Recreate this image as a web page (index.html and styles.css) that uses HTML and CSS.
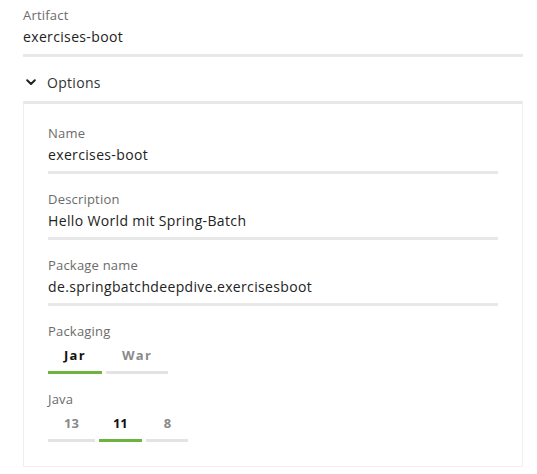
FILE: index.html
```html
<!DOCTYPE html>
<html>
<head>
<meta charset="utf-8">
<link rel="stylesheet" href="styles.css">
</head>
<body>
<div class="page">
  <div class="field field--top">
    <div class="label">Artifact</div>
    <div class="value">exercises-boot</div>
  </div>

  <div class="options-toggle">
    <svg class="chevron" width="10" height="7" viewBox="0 0 10 7"><path d="M1.2 1.2 L5 5 L8.8 1.2" fill="none" stroke="#222" stroke-width="2" stroke-linecap="round" stroke-linejoin="round"/></svg>
    <span>Options</span>
  </div>

  <div class="options-box">
    <div class="field">
      <div class="label">Name</div>
      <div class="value">exercises-boot</div>
    </div>
    <div class="field">
      <div class="label">Description</div>
      <div class="value">Hello World mit Spring-Batch</div>
    </div>
    <div class="field">
      <div class="label">Package name</div>
      <div class="value">de.springbatchdeepdive.exercisesboot</div>
    </div>
    <div class="group">
      <div class="label">Packaging</div>
      <div class="tabs">
        <span class="tab tab--active">Jar</span>
        <span class="tab">War</span>
      </div>
    </div>
    <div class="group">
      <div class="label">Java</div>
      <div class="tabs">
        <span class="tab tab--num">13</span>
        <span class="tab tab--num tab--narrow tab--active">11</span>
        <span class="tab tab--num tab--wide">8</span>
      </div>
    </div>
  </div>
</div>
</body>
</html>
```

FILE: styles.css
```css
html, body {
  margin: 0;
  padding: 0;
  background: #fff;
}
body {
  font-family: "Open Sans", Lato, sans-serif;
  color: #222;
}
.page {
  padding: 6px 14px 0 23px;
  width: 500px;
}
.label {
  font-size: 13px;
  letter-spacing: 0.2px;
  line-height: 18px;
  color: #6b6b6b;
}
.value {
  font-size: 14px;
  letter-spacing: 0.35px;
  line-height: 22px;
  margin-top: 2px;
  padding-bottom: 5px;
  border-bottom: 3px solid #e8e8e8;
  color: #222;
}
.field--top .value {
  padding-bottom: 6px;
}
.options-toggle {
  margin-top: 14px;
  height: 22px;
  display: flex;
  align-items: center;
  font-size: 14px;
  letter-spacing: 0.3px;
  color: #333;
  margin-bottom: 8px;
}
.chevron {
  margin-left: 3px;
  margin-right: 11px;
}
.options-box {
  border: 1px solid #efefef;
  border-top: 3px solid #e8e8e8;
  padding: 20px 24px 24px 24px;
}
.options-box .field + .field,
.options-box .group {
  margin-top: 16px;
}
.tabs {
  display: flex;
  gap: 4px;
  margin-top: 4px;
}
.tab {
  font-size: 13px;
  font-weight: 700;
  letter-spacing: 1.3px;
  line-height: 22px;
  padding: 0 16px 5px 16px;
  border-bottom: 3px solid #e3e3e3;
  color: #8a8a8a;
}
.tab--num {
  letter-spacing: 0;
}
.tab--narrow {
  padding: 0 14px 5px 14px;
}
.tab--wide {
  padding: 0 17px 5px 18px;
}
.tab--active {
  color: #111;
  border-bottom-color: #6db33f;
}
```
